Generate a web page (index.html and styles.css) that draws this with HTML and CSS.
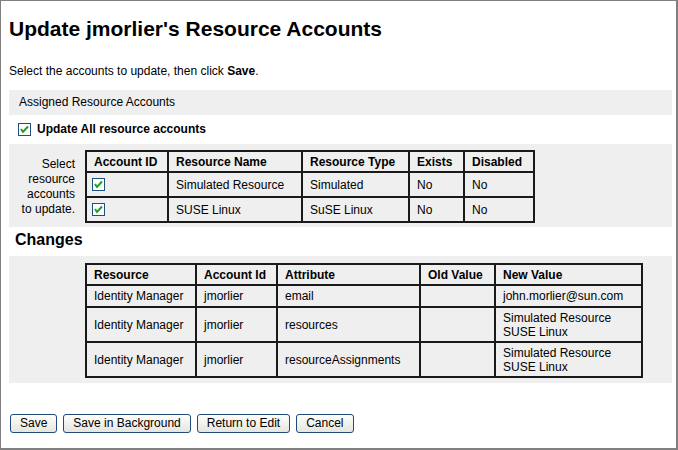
FILE: index.html
```html
<!DOCTYPE html>
<html>
<head>
<meta charset="utf-8">
<title>Update Resource Accounts</title>
<link rel="stylesheet" href="styles.css">
</head>
<body>
<div class="page">
  <h1 class="title">Update jmorlier's Resource Accounts</h1>
  <p class="intro">Select the accounts to update, then click <b>Save</b>.</p>

  <div class="band">Assigned Resource Accounts</div>

  <label class="checkrow">
    <svg class="cb" width="13" height="13" viewBox="0 0 13 13"><rect x="0.5" y="0.5" width="12" height="12" fill="#fff" stroke="#1c5180"/><polyline points="3,6 5,9 10,3.5" fill="none" stroke="#21a121" stroke-width="2"/></svg>
    <span class="checklabel">Update All resource accounts</span>
  </label>

  <div class="panel panel-accounts">
    <div class="selectlabel">Select<br>resource<br>accounts<br>to update.</div>
    <table class="grid grid-accounts">
      <tr class="h21">
        <th class="w82">Account ID</th>
        <th class="w134">Resource Name</th>
        <th class="w107">Resource Type</th>
        <th class="w55">Exists</th>
        <th class="w70">Disabled</th>
      </tr>
      <tr class="h25">
        <td class="cbcell"><svg class="cb" width="13" height="13" viewBox="0 0 13 13"><rect x="0.5" y="0.5" width="12" height="12" fill="#fff" stroke="#1c5180"/><polyline points="3,6 5,9 10,3.5" fill="none" stroke="#21a121" stroke-width="2"/></svg></td>
        <td>Simulated Resource</td>
        <td>Simulated</td>
        <td>No</td>
        <td>No</td>
      </tr>
      <tr class="h25">
        <td class="cbcell"><svg class="cb" width="13" height="13" viewBox="0 0 13 13"><rect x="0.5" y="0.5" width="12" height="12" fill="#fff" stroke="#1c5180"/><polyline points="3,6 5,9 10,3.5" fill="none" stroke="#21a121" stroke-width="2"/></svg></td>
        <td>SUSE Linux</td>
        <td>SuSE Linux</td>
        <td>No</td>
        <td>No</td>
      </tr>
    </table>
  </div>

  <h2 class="subtitle">Changes</h2>

  <div class="panel panel-changes">
    <table class="grid grid-changes">
      <tr class="h21">
        <th class="w110">Resource</th>
        <th class="w81">Account Id</th>
        <th class="w143">Attribute</th>
        <th class="w75">Old Value</th>
        <th class="w147">New Value</th>
      </tr>
      <tr class="h22">
        <td>Identity Manager</td>
        <td>jmorlier</td>
        <td>email</td>
        <td></td>
        <td>john.morlier@sun.com</td>
      </tr>
      <tr class="h35">
        <td>Identity Manager</td>
        <td>jmorlier</td>
        <td>resources</td>
        <td></td>
        <td>Simulated Resource<br>SUSE Linux</td>
      </tr>
      <tr class="h35">
        <td>Identity Manager</td>
        <td>jmorlier</td>
        <td>resourceAssignments</td>
        <td></td>
        <td>Simulated Resource<br>SUSE Linux</td>
      </tr>
    </table>
  </div>

  <div class="buttons">
    <button class="btn">Save</button>
    <button class="btn">Save in Background</button>
    <button class="btn">Return to Edit</button>
    <button class="btn">Cancel</button>
  </div>
</div>
</body>
</html>
```

FILE: styles.css
```css
html, body {
  margin: 0;
  padding: 0;
  background: #fff;
}

body {
  font-family: "Liberation Sans", Arial, sans-serif;
  font-size: 12px;
  color: #000;
}

.page {
  box-sizing: border-box;
  width: 678px;
  height: 450px;
  border-style: solid;
  border-color: #808080;
  border-width: 1px 2px 2px 1px;
  padding: 0 4px 0 8px;
  overflow: hidden;
}

.title {
  margin: 16px 0 0 0;
  font-size: 21px;
  line-height: 24px;
  font-weight: bold;
}

.intro {
  margin: 23px 0 0 0;
  line-height: 15px;
}

.band {
  margin-top: 11px;
  background: #efefef;
  height: 25px;
  box-sizing: border-box;
  padding: 5px 0 5px 10px;
  line-height: 15px;
}

.checkrow {
  display: flex;
  align-items: center;
  gap: 6px;
  height: 29px;
  padding-left: 9px;
}

.checklabel {
  font-weight: bold;
  line-height: 15px;
}

.cb {
  display: block;
  flex: none;
}

.panel {
  background: #efefef;
}

.panel-accounts {
  display: flex;
  align-items: center;
  padding: 6px 0 4px 0;
}

.selectlabel {
  width: 66px;
  text-align: right;
  line-height: 15px;
  margin-right: 10px;
}

.grid {
  border-collapse: separate;
  border-spacing: 0;
  border-top: 2px solid #1a1a1a;
  border-left: 2px solid #1a1a1a;
  background: transparent;
  table-layout: fixed;
}

.grid th,
.grid td {
  box-sizing: border-box;
  border-right: 2px solid #1a1a1a;
  border-bottom: 2px solid #1a1a1a;
  padding: 0 4px 0 7px;
  text-align: left;
  vertical-align: middle;
  font-size: 12px;
  line-height: 14px;
  white-space: nowrap;
}

.grid th {
  font-weight: bold;
}

.grid td.cbcell {
  padding-left: 5px;
}

.h21 { height: 21px; }
.h22 { height: 22px; }
.h25 { height: 25px; }
.h35 { height: 35px; }

.w55 { width: 55px; }
.w70 { width: 70px; }
.w75 { width: 75px; }
.w81 { width: 81px; }
.w82 { width: 82px; }
.w107 { width: 107px; }
.w110 { width: 110px; }
.w134 { width: 134px; }
.w143 { width: 143px; }
.w147 { width: 147px; }

.subtitle {
  margin: 3px 0 0 6px;
  font-size: 16px;
  line-height: 19px;
  font-weight: bold;
}

.panel-changes {
  margin-top: 7px;
  padding: 7px 0 5px 76px;
}

.buttons {
  display: flex;
  gap: 6px;
  margin-top: 31px;
  padding-left: 1px;
}

.btn {
  height: 19px;
  box-sizing: border-box;
  padding: 0 9px;
  margin: 0;
  font-family: "Liberation Sans", Arial, sans-serif;
  font-size: 12px;
  line-height: 15px;
  color: #000;
  border: 1px solid #1f4a7a;
  border-radius: 3px;
  background: linear-gradient(#fdfdfb, #e6e6e0);
}
```
